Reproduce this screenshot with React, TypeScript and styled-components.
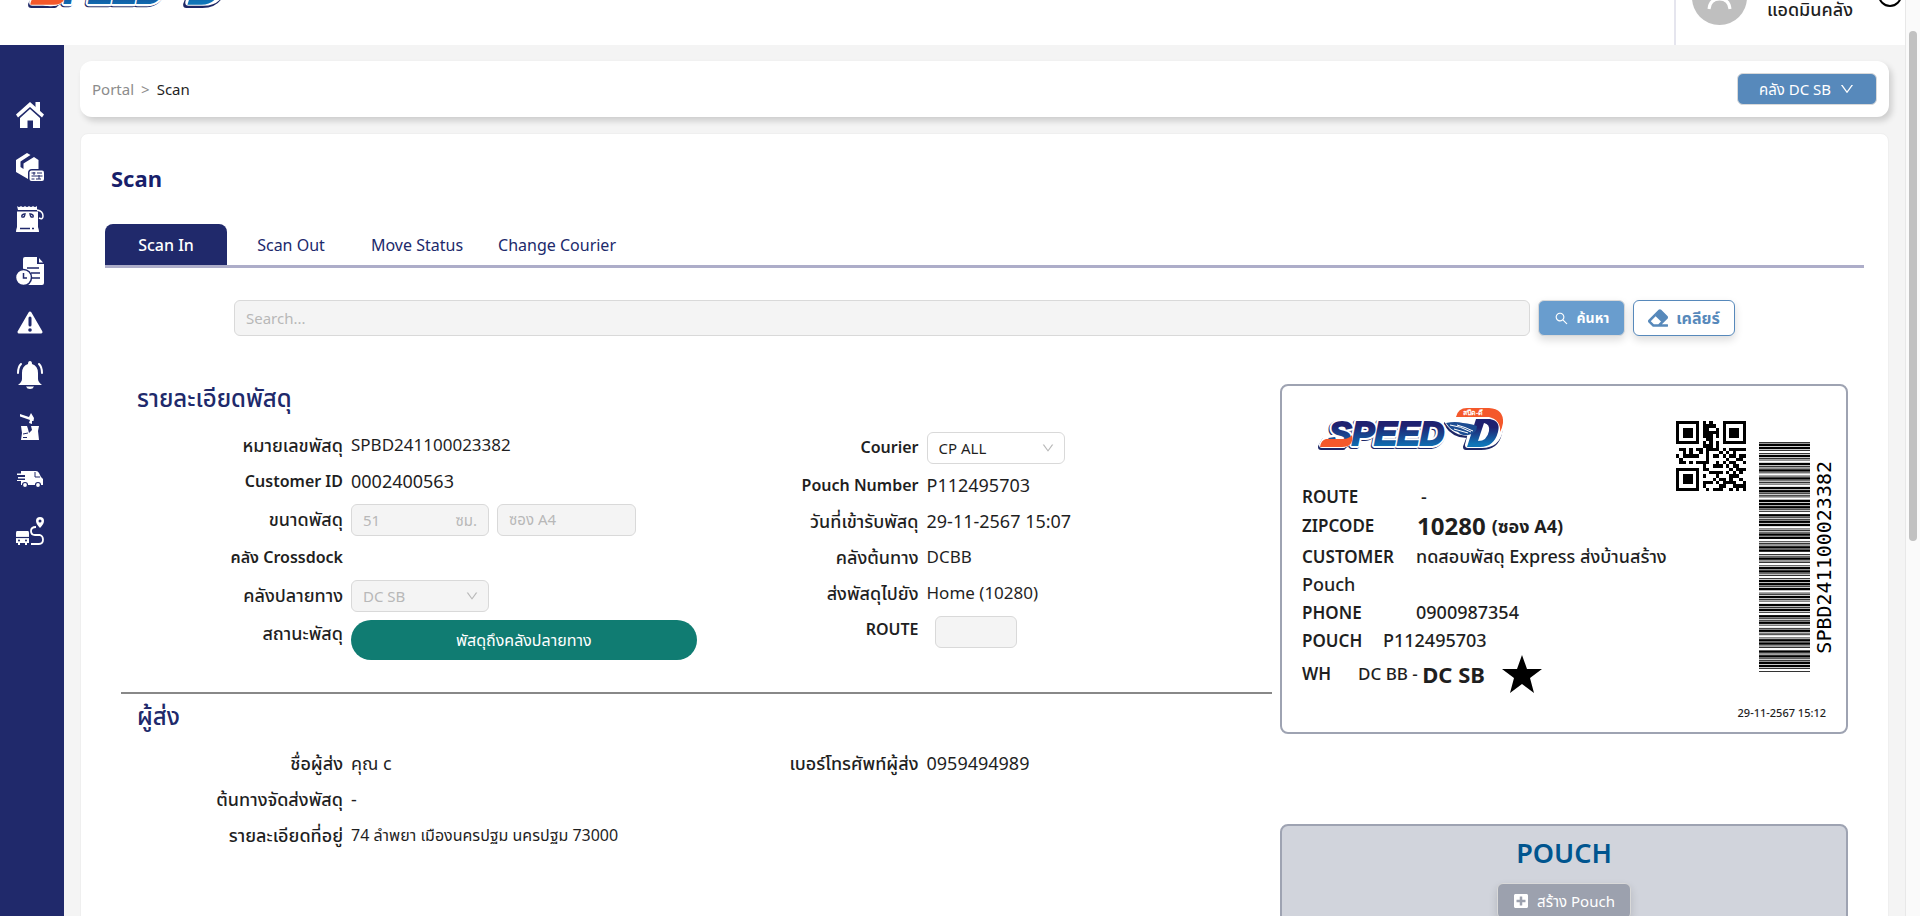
import React, { useId } from 'react';
import styled, { createGlobalStyle } from 'styled-components';
import { AiOutlineDown, AiOutlineSearch } from 'react-icons/ai';
import { FaEraser, FaPlusSquare } from 'react-icons/fa';

const GlobalStyle = createGlobalStyle`
  *, *::before, *::after { box-sizing: border-box; }
  body {
    margin: 0;
    background: #f4f4f4;
    color: #1f1f1f;
    font-family: "Noto Sans", "Noto Sans Thai", "Prompt", sans-serif;
    font-size: 17px;
    line-height: 24px;
  }
  button, input, select { font: inherit; }
`;

/* ---------- code generators ---------- */

const ALNUM = '0123456789ABCDEFGHIJKLMNOPQRSTUVWXYZ $%*+-./:';

function gfMul(a: number, b: number) {
  let r = 0;
  for (let i = 7; i >= 0; i--) {
    r = (r << 1) ^ ((r >> 7) * 0x11d);
    r ^= ((b >> i) & 1) * a;
  }
  return r;
}

function reedSolomon(data: number[], degree: number) {
  const gen: number[] = new Array(degree).fill(0);
  gen[degree - 1] = 1;
  let root = 1;
  for (let i = 0; i < degree; i++) {
    for (let j = 0; j < degree; j++) {
      gen[j] = gfMul(gen[j], root);
      if (j + 1 < degree) gen[j] ^= gen[j + 1];
    }
    root = gfMul(root, 2);
  }
  const rem: number[] = new Array(degree).fill(0);
  for (const b of data) {
    const f = b ^ (rem.shift() as number);
    rem.push(0);
    gen.forEach((g, i) => { rem[i] ^= gfMul(g, f); });
  }
  return rem;
}

/* Version 1 symbol, error correction level Q, alphanumeric mode, mask 0. */
function encodeQr(text: string): boolean[][] {
  let bits = '0010' + text.length.toString(2).padStart(9, '0');
  for (let i = 0; i < text.length; i += 2) {
    if (i + 1 < text.length) {
      bits += (ALNUM.indexOf(text[i]) * 45 + ALNUM.indexOf(text[i + 1])).toString(2).padStart(11, '0');
    } else {
      bits += ALNUM.indexOf(text[i]).toString(2).padStart(6, '0');
    }
  }
  bits = bits.padEnd(104, '0').slice(0, 104);
  const data = (bits.match(/.{8}/g) as string[]).map((b) => parseInt(b, 2));
  const stream = [...data, ...reedSolomon(data, 13)];

  const m: boolean[][] = Array.from({ length: 21 }, () => new Array(21).fill(false));
  const used: boolean[][] = Array.from({ length: 21 }, () => new Array(21).fill(false));
  const set = (x: number, y: number, v: boolean) => {
    if (x < 0 || y < 0 || x > 20 || y > 20) return;
    m[y][x] = v;
    used[y][x] = true;
  };
  for (let i = 0; i < 21; i++) {
    set(6, i, i % 2 === 0);
    set(i, 6, i % 2 === 0);
  }
  [[3, 3], [17, 3], [3, 17]].forEach(([cx, cy]) => {
    for (let dy = -4; dy <= 4; dy++) {
      for (let dx = -4; dx <= 4; dx++) {
        const d = Math.max(Math.abs(dx), Math.abs(dy));
        set(cx + dx, cy + dy, d !== 2 && d !== 4);
      }
    }
  });
  const head = 3 << 3;
  let rem = head;
  for (let i = 0; i < 10; i++) rem = (rem << 1) ^ ((rem >> 9) * 0x537);
  const format = ((head << 10) | rem) ^ 0x5412;
  const bit = (i: number) => ((format >> i) & 1) === 1;
  for (let i = 0; i <= 5; i++) set(8, i, bit(i));
  set(8, 7, bit(6));
  set(8, 8, bit(7));
  set(7, 8, bit(8));
  for (let i = 9; i < 15; i++) set(14 - i, 8, bit(i));
  for (let i = 0; i < 8; i++) set(20 - i, 8, bit(i));
  for (let i = 8; i < 15; i++) set(8, 6 + i, bit(i));
  set(8, 13, true);

  let n = 0;
  for (let right = 20; right >= 1; right -= 2) {
    if (right === 6) right = 5;
    for (let v = 0; v < 21; v++) {
      for (let j = 0; j < 2; j++) {
        const x = right - j;
        const up = ((right + 1) & 2) === 0;
        const y = up ? 20 - v : v;
        if (!used[y][x] && n < 208) {
          const on = ((stream[n >> 3] >> (7 - (n & 7))) & 1) === 1;
          m[y][x] = on !== ((x + y) % 2 === 0);
          n++;
        }
      }
    }
  }
  return m;
}

const CODE39: Record<string, string> = {
  '0': 'nnnwwnwnn', '1': 'wnnwnnnnw', '2': 'nnwwnnnnw', '3': 'wnwwnnnnn', '4': 'nnnwwnnnw',
  '5': 'wnnwwnnnn', '6': 'nnwwwnnnn', '7': 'nnnwnnwnw', '8': 'wnnwnnwnn', '9': 'nnwwnnwnn',
  B: 'nnwnnwnnw', D: 'nnnnwwnnw', P: 'nnwnwnnwn', S: 'nnwnnnwwn', '*': 'nwnnwnwnn',
};

function code39Bars(text: string) {
  const bars: Array<{ at: number; size: number }> = [];
  let at = 0;
  for (const ch of `*${text}*`) {
    [...CODE39[ch]].forEach((el, i) => {
      const size = el === 'w' ? 3 : 1;
      if (i % 2 === 0) bars.push({ at, size });
      at += size;
    });
    at += 1;
  }
  return { bars, total: at - 1 };
}

const QrCode = ({ value }: { value: string }) => (
  <svg width="70" height="70" viewBox="0 0 21 21" role="img" aria-label={value} shapeRendering="crispEdges">
    {encodeQr(value).map((row, y) =>
      row.map((on, x) => (on ? <rect key={`${x}-${y}`} x={x} y={y} width="1" height="1" fill="#000" /> : null)),
    )}
  </svg>
);

const Barcode = ({ value }: { value: string }) => {
  const { bars, total } = code39Bars(value);
  return (
    <svg width="51" height="230" viewBox={`0 0 51 ${total}`} preserveAspectRatio="none" role="img" aria-label={value}>
      {bars.map((b) => (
        <rect key={b.at} x="0" y={total - b.at - b.size} width="51" height={b.size} fill="#000" />
      ))}
    </svg>
  );
};

/* ---------- drawings ---------- */

const Logo = ({ width }: { width: number }) => {
  const id = useId();
  const blue = `url(#${id}b)`;
  const word = { fontFamily: '"Liberation Sans", sans-serif', fontWeight: 700, fontStyle: 'italic' } as const;
  return (
    <svg width={width} viewBox="0 0 187 43" role="img" aria-label="SPEED-D">
      <defs>
        <linearGradient id={`${id}b`} x1="0" y1="0" x2="0" y2="1">
          <stop offset="0.3" stopColor="#1f2170" />
          <stop offset="0.9" stopColor="#0f75b8" />
        </linearGradient>
      </defs>
      <g fill="#1d2766" stroke="#1d2766" strokeWidth="6" strokeLinejoin="round">
        <text x="11" y="38" fontSize="34" {...word}>SPEED</text>
        <path d="M4 39 L8 32 H30 L26 39Z" />
        <path d="M149 39 L158 15 H176 Q185 15 182 25 Q179 39 164 39Z" />
        <path d="M130 16 Q144 14 156 18 L152 27 Q138 28 130 16Z" />
      </g>
      <g fill="#fff" stroke="#fff" strokeWidth="6" strokeLinejoin="round">
        <text x="12" y="37" fontSize="34" {...word}>SPEED</text>
        <path d="M5 37 L9 30 H30 L26 37Z" />
        <path d="M151 37 L159 5 H176 Q185 12 183 22 Q180 37 165 37Z" />
        <path d="M131 14 Q144 10 158 16 L152 25 Q138 25 131 14Z" />
      </g>
      <text x="12" y="37" fontSize="34" fill={blue} stroke={blue} strokeWidth="2" {...word}>SPEED</text>
      <path d="M3 39 Q4 32 9 31 H27 Q33 30 35 27 Q37 39 25 39Z" fill="#f4582b" />
      <path d="M139 9 Q141 0 150 0 H172 Q187 1 186 15 Q185 21 183 24 Q184 12 172 9Z" fill="#f4582b" />
      <path
        fillRule="evenodd"
        d="M150 39 L159 11 H173 Q184 13 181 24 Q177 39 163 39Z M161 33 Q170 33 172 23 Q173 16 167 15Z"
        fill={blue}
      />
      <path d="M129 15 Q138 13 146 15 Q155 16 160 18 Q160 26 151 27 Q145 28 141 24 Q134 23 129 15Z" fill="#1c4c92" />
      <path d="M133 17 Q143 18 154 24 M140 17 Q148 19 156 23 M137 21 Q144 23 151 25" fill="none" stroke="#fff" strokeWidth="1" />
      <text x="146" y="7" fontSize="7" fontWeight="600" fill="#fff" fontFamily='"Noto Sans", sans-serif'>สปีด-ดี</text>
    </svg>
  );
};

const icons: Array<{ name: string; art: React.ReactNode }> = [
  {
    name: 'หน้าหลัก',
    art: (
      <g fill="#fff">
        <path d="M14 1 L28 13.500 L26 16.500 L14 6 L2 16.500 L0 13.500Z" />
        <path d="M19.500 1 h4.500 v10 l-4.500 -4Z" />
        <path d="M14 8 L24 17 V27 H17 V19.500 H11.500 V27 H4 V17Z" />
      </g>
    ),
  },
  {
    name: 'พัสดุ',
    art: (
      <g fill="#fff">
        <path d="M0 7 L11 0 L14.500 2 L4.500 8.500 V14 L7.500 16 V10.500 L18 4 L22.500 7 V16 H16 Q12 16 12 20 V26 L0 19Z" />
        <rect x="13.500" y="17.500" width="14.500" height="10.500" rx="2" />
        <path d="M15.500 20h4M21 20h5M15.500 23h11M15.500 26h3M20 26h5M18 19v3M23 22v4" stroke="#20296b" strokeWidth="1" fill="none" />
      </g>
    ),
  },
  {
    name: 'ถุงพัสดุ',
    art: (
      <g>
        <path d="M1 1 Q3 3 5 1 Q7 3 9 1 Q11 3 13 1 Q15 3 17 1 Q19 3 21 1 V5 H2Z" fill="#fff" />
        <path d="M1 6.500 H22 V22 Q23 25 23 27 H0 Q0 25 1 22Z" fill="#fff" />
        <path d="M21 5 Q27 6 27 11 Q27 15 23 13" fill="none" stroke="#fff" strokeWidth="1.500" />
        <path d="M9 8 Q9 13 6 12 Q5 10 8 9M14 8 Q14 13 17 12 Q18 10 15 9M4 23.500h10M16 23.500h2" fill="none" stroke="#20296b" strokeWidth="1.400" />
      </g>
    ),
  },
  {
    name: 'ประวัติ',
    art: (
      <g>
        <path d="M9 0 H21 V7 H28 V26 Q28 28 26 28 H7 V2 Q7 0 9 0Z" fill="#fff" />
        <path d="M23 1 L27 5.500 H23Z" fill="#fff" />
        <path d="M11 11h12M15 16h9M15 21h9" stroke="#20296b" strokeWidth="1.500" />
        <circle cx="7.500" cy="20.500" r="8" fill="#fff" stroke="#20296b" strokeWidth="1.500" />
        <path d="M7.500 16 V21 H11" fill="none" stroke="#20296b" strokeWidth="1.500" />
      </g>
    ),
  },
  {
    name: 'แจ้งปัญหา',
    art: (
      <g>
        <path d="M14 4 L25 23 H3Z" fill="#fff" stroke="#fff" strokeWidth="3" strokeLinejoin="round" />
        <path d="M14 9 V16" stroke="#20296b" strokeWidth="3" strokeLinecap="round" />
        <circle cx="14" cy="21" r="1.800" fill="#20296b" />
      </g>
    ),
  },
  {
    name: 'แจ้งเตือน',
    art: (
      <g>
        <path d="M14 0 Q16 0 16 3 Q22 5 22 12 V18 Q22 21 26 24 H2 Q6 21 6 18 V12 Q6 5 12 3 Q12 0 14 0Z" fill="#fff" />
        <path d="M10 25.500 H18 Q17 28 14 28 Q11 28 10 25.500Z" fill="#fff" />
        <path d="M5 3 Q2 6 2 12M23 3 Q26 6 26 12" fill="none" stroke="#fff" strokeWidth="2" strokeLinecap="round" />
      </g>
    ),
  },
  {
    name: 'พัสดุเสียหาย',
    art: (
      <g fill="#fff">
        <path d="M4 1 L13 4 L15 0 L18 5 L17.500 8 L16 8 V11 L13 10 L14 7 L4 3.500Z" />
        <path d="M5 13 H11 L12 16 L13 20 L16 17 L15 13 H23 L22 18 L23 27 H5 L6 20Z" />
        <path d="M7 21 L12 20M7 24.500h4" stroke="#20296b" strokeWidth="1" />
      </g>
    ),
  },
  {
    name: 'ขนส่ง',
    art: (
      <g>
        <path d="M5 6 H20 Q22 6 23 8 L25 12 L27 14 V20 H5 V16 H1 V15 H9 V13.500 H2 V12 H9 V10 H1 V8.500 H5Z" fill="#fff" />
        <path d="M19 7 V12 H24" fill="none" stroke="#20296b" strokeWidth="1" />
        <circle cx="9" cy="20" r="2.500" fill="#fff" stroke="#20296b" strokeWidth="1.200" />
        <circle cx="22" cy="20" r="2.500" fill="#fff" stroke="#20296b" strokeWidth="1.200" />
      </g>
    ),
  },
  {
    name: 'เส้นทาง',
    art: (
      <g>
        <path d="M1 14 H12 Q13 14 13 16 V26 H11 V28 H9 V26 H4 V28 H2 V26 H0 V16 Q0 14 1 14Z" fill="#fff" />
        <path d="M0 20.500h13" stroke="#20296b" strokeWidth="1.200" />
        <circle cx="3" cy="23.500" r="1" fill="#20296b" />
        <circle cx="10" cy="23.500" r="1" fill="#20296b" />
        <path d="M24 0 Q28 0 28 4 Q28 7 24 11 Q20 7 20 4 Q20 0 24 0Z" fill="#fff" />
        <circle cx="24" cy="4" r="1.500" fill="#20296b" />
        <path d="M20 10 Q15 10 15 14 Q15 18 19 18 H24 Q27 19 27 22.500 Q27 27 23 27 H15" fill="none" stroke="#fff" strokeWidth="1.800" />
      </g>
    ),
  },
];

/* ---------- page frame ---------- */

const Page = styled.div`
  display: flex;
  height: 100vh;
  overflow: hidden;
`;

const Viewport = styled.div`
  flex: 1;
  min-width: 0;
  display: flex;
  flex-direction: column;
`;

const ScrollTrack = styled.div`
  flex: 0 0 15px;
  display: flex;
  justify-content: center;
  padding-top: 31px;
  background: #fafafa;
  border-left: 1px solid #e8e8e8;
`;

const ScrollThumb = styled.div`
  width: 8px;
  height: 510px;
  border-radius: 4px;
  background: #c1c1c1;
`;

const Header = styled.header`
  flex: 0 0 45px;
  display: flex;
  justify-content: space-between;
  align-items: flex-end;
  overflow: hidden;
  background: #fff;
`;

const Brand = styled.a`
  display: flex;
  padding: 0 0 36px 27px;
`;

const Account = styled.div`
  display: flex;
  align-items: flex-end;
  height: 80px;
  padding: 0 3px 20px 16px;
  border-left: 2px solid #e5e5ee;
`;

const AccountName = styled.span`
  padding: 0 25px 4px 20px;
  font-size: 18px;
  font-weight: 500;
`;

const SignOut = styled.button`
  width: 24px;
  height: 24px;
  margin-bottom: 18px;
  border: 2px solid #000;
  border-radius: 50%;
  background: none;
`;

const Body = styled.div`
  flex: 1;
  min-height: 0;
  display: flex;
`;

const Sidebar = styled.nav`
  flex: 0 0 64px;
  display: flex;
  flex-direction: column;
  padding: 44px 4px 0 0;
  background: #20296b;
`;

const SideLink = styled.a`
  display: flex;
  justify-content: center;
  align-items: center;
  height: 52px;
`;

const Main = styled.main`
  flex: 1;
  min-width: 0;
  display: flex;
  flex-direction: column;
  gap: 16px;
  padding: 16px 16px 0;
`;

const TopBar = styled.div`
  flex: none;
  display: flex;
  justify-content: space-between;
  align-items: center;
  height: 56px;
  padding: 0 12px;
  border-radius: 12px;
  background: #fff;
  box-shadow: 3px 4px 6px rgba(0, 0, 0, 0.16);
`;

const Crumbs = styled.nav`
  display: flex;
  gap: 7px;
  font-size: 15px;
  color: #8c8c8c;
  a { color: inherit; text-decoration: none; }
  strong { color: #1f1f1f; font-weight: 400; }
`;

const WarehouseButton = styled.button`
  display: flex;
  align-items: center;
  justify-content: center;
  gap: 8px;
  width: 140px;
  height: 32px;
  border: 1px solid #d9d9d9;
  border-radius: 6px;
  background: #5789bb;
  color: #fff;
  font-size: 15px;
`;

const Card = styled.section`
  flex: 1 0 auto;
  padding: 24px;
  border: 1px solid #efefef;
  border-radius: 8px;
  background: #fff;
`;

const Title = styled.h1`
  margin: 4px 0 30px 6px;
  font-size: 22px;
  line-height: 32px;
  font-weight: 700;
  color: #181f6b;
`;

const Tabs = styled.div`
  display: flex;
  gap: 3px;
  border-bottom: 3px solid #adadc9;
`;

const Tab = styled.button<{ $active?: boolean }>`
  min-width: 122px;
  height: 41px;
  padding: 0 16px;
  border: 0;
  border-radius: 8px 8px 0 0;
  background: ${(p) => (p.$active ? '#20296b' : 'transparent')};
  color: ${(p) => (p.$active ? '#fff' : '#20296b')};
  font-size: 16px;
  font-weight: ${(p) => (p.$active ? 500 : 400)};
`;

const SearchRow = styled.form`
  display: flex;
  align-items: center;
  gap: 8px;
  margin: 32px 129px 0;
`;

const Field = styled.input`
  min-width: 0;
  height: 32px;
  padding: 0 11px;
  border: 1px solid #d9d9d9;
  border-radius: 6px;
  background: #f4f4f4;
  color: #b8b8b8;
  font-size: 15px;
  &::placeholder { color: #b8b8b8; opacity: 1; }
`;

const SearchField = styled(Field)`
  flex: 1;
  height: 36px;
`;

const ActionButton = styled.button<{ $outline?: boolean }>`
  display: flex;
  align-items: center;
  justify-content: center;
  gap: 8px;
  width: ${(p) => (p.$outline ? 102 : 87)}px;
  height: 36px;
  border: 1px solid ${(p) => (p.$outline ? '#5789bb' : '#d9d9d9')};
  border-radius: 6px;
  background: ${(p) => (p.$outline ? '#fff' : '#699dce')};
  color: ${(p) => (p.$outline ? '#5789bb' : '#fff')};
  font-size: ${(p) => (p.$outline ? 16 : 14)}px;
  font-weight: 700;
  box-shadow: 0 4px 8px rgba(0, 0, 0, 0.14);
`;

const Columns = styled.div`
  display: grid;
  grid-template-columns: minmax(0, 1151fr) minmax(0, 568fr);
  gap: 8px;
  margin: 44px 16px 0;
`;

const Group = styled.section`
  padding-bottom: 28px;
  & + & {
    padding-top: 4px;
    border-top: 2px solid #888;
  }
`;

const GroupTitle = styled.h2`
  margin: 0 0 12px;
  padding: 0 16px;
  font-size: 24px;
  line-height: 36px;
  font-weight: 500;
  color: #20296b;
`;

const Pair = styled.div`
  display: grid;
  grid-template-columns: 1fr 1fr;
  align-items: start;
`;

const Row = styled.div<{ $middle?: boolean }>`
  display: flex;
  gap: 8px;
  align-items: ${(p) => (p.$middle ? 'center' : 'flex-start')};
`;

const Name = styled.label<{ $latin?: boolean }>`
  flex: 0 0 222px;
  padding: 5px 0 7px;
  text-align: right;
  font-size: ${(p) => (p.$latin ? 16 : 18)}px;
  font-weight: ${(p) => (p.$latin ? 600 : 500)};
`;

const Value = styled.output<{ $size?: number }>`
  padding: 5px 0 7px;
  font-size: ${(p) => p.$size ?? 18}px;
`;

const Controls = styled.div`
  flex: 1;
  display: flex;
  gap: 8px;
  padding: 4px 0;
`;

const Suffixed = styled.span`
  display: flex;
  align-items: center;
  width: 138px;
  height: 32px;
  padding-right: 11px;
  border: 1px solid #d9d9d9;
  border-radius: 6px;
  background: #f4f4f4;
  color: #b8b8b8;
  font-size: 15px;
`;

const BareInput = styled.input`
  flex: 1;
  min-width: 0;
  padding: 0 11px;
  border: 0;
  background: none;
  color: inherit;
`;

const SizeField = styled(Field)`
  width: 139px;
`;

const RouteField = styled(Field)`
  width: 82px;
  margin-left: 8px;
`;

const SelectBox = styled.span`
  position: relative;
  display: flex;
  width: 138px;
  svg {
    position: absolute;
    right: 10px;
    top: 9px;
    pointer-events: none;
    color: #b8b8b8;
  }
`;

const Select = styled.select`
  appearance: none;
  width: 100%;
  height: 32px;
  padding: 0 11px;
  border: 1px solid #d9d9d9;
  border-radius: 6px;
  background: #fff;
  color: #1f1f1f;
  font-size: 15px;
  opacity: 1;
  &:disabled { background: #f4f4f4; color: #b8b8b8; }
`;

const StatusButton = styled.button`
  flex: 1;
  height: 40px;
  border: 0;
  border-radius: 20px;
  background: #107c72;
  color: #fff;
  font-size: 16px;
`;

/* ---------- right column ---------- */

const Side = styled.div`
  display: flex;
  flex-direction: column;
  gap: 90px;
  padding-top: 4px;
`;

const Sticker = styled.article`
  display: flex;
  justify-content: space-between;
  height: 350px;
  padding: 22px 10px 0 20px;
  border: 2px solid #9ea3b2;
  border-radius: 8px;
`;

const StickerText = styled.div`
  flex: 1;
  min-width: 0;
  font-size: 18px;
  font-weight: 500;
`;

const StickerLogo = styled.div`
  display: flex;
  padding: 0 0 31px 15px;
`;

const Line = styled.div`
  line-height: 28px;
`;

const ZipLine = styled.div`
  display: flex;
  align-items: center;
  height: 32px;
`;

const Big = styled.b<{ $size: number }>`
  margin-right: 6px;
  font-size: ${(p) => p.$size}px;
  font-weight: 700;
`;

const Key = styled.span<{ $w: number }>`
  display: inline-block;
  min-width: ${(p) => p.$w}px;
  font-size: 17px;
  line-height: 20px;
  font-weight: 600;
`;

const WarehouseLine = styled.div`
  display: flex;
  align-items: center;
  height: 40px;
  font-size: 17px;
  svg { margin-left: 11px; }
`;

const Codes = styled.div`
  display: flex;
  flex-direction: column;
  justify-content: space-between;
  align-items: flex-end;
  padding-bottom: 7px;
`;

const CodeRow = styled.div`
  display: flex;
  align-items: flex-start;
  padding-top: 13px;
`;

const BarcodeWrap = styled.div`
  display: flex;
  align-items: center;
  gap: 2px;
  padding: 21px 0 0 13px;
`;

const CodeText = styled.span`
  writing-mode: vertical-rl;
  transform: rotate(180deg);
  font-family: "DejaVu Sans Mono", monospace;
  font-size: 20px;
  line-height: 24px;
  color: #000;
`;

const Stamp = styled.time`
  padding-right: 10px;
  font-size: 11px;
  font-weight: 500;
`;

const PouchPanel = styled.section`
  display: flex;
  flex-direction: column;
  align-items: center;
  gap: 12px;
  height: 240px;
  padding-top: 9px;
  border: 2px solid #9ea3b2;
  border-radius: 8px;
  background: #d1d4dc;
`;

const PouchTitle = styled.h2`
  margin: 0;
  font-size: 27px;
  line-height: 36px;
  font-weight: 600;
  color: #00558f;
`;

const PouchButton = styled.button`
  display: flex;
  align-items: center;
  gap: 8px;
  height: 36px;
  padding: 0 15px;
  border: 1px solid #d9d9d9;
  border-radius: 6px;
  background: #9ca1ae;
  color: #fff;
  font-size: 15px;
  box-shadow: 0 4px 8px rgba(0, 0, 0, 0.14);
`;

const PARCEL = 'SPBD241100023382';

export default function App() {
  return (
    <>
      <GlobalStyle />
      <Page>
        <Viewport>
          <Header>
            <Brand href="#home"><Logo width={200} /></Brand>
            <Account>
              <svg width="55" height="55" viewBox="0 0 55 55" aria-hidden="true">
                <circle cx="27.500" cy="27.500" r="27.500" fill="#bfbfbf" />
                <circle cx="27.500" cy="20" r="8" fill="none" stroke="#fff" strokeWidth="3" />
                <path d="M17 39 Q18 29 27.500 29 Q37 29 38 39" fill="none" stroke="#fff" strokeWidth="3" />
              </svg>
              <AccountName>แอดมินคลัง</AccountName>
              <SignOut aria-label="Sign out" />
            </Account>
          </Header>
          <Body>
            <Sidebar>
              {icons.map((i) => (
                <SideLink key={i.name} href="#menu" aria-label={i.name}>
                  <svg width="28" height="28" viewBox="0 0 28 28">{i.art}</svg>
                </SideLink>
              ))}
            </Sidebar>
            <Main>
              <TopBar>
                <Crumbs><a href="#portal">Portal</a><span>&gt;</span><strong>Scan</strong></Crumbs>
                <WarehouseButton type="button">คลัง DC SB <AiOutlineDown size={16} /></WarehouseButton>
              </TopBar>
              <Card>
                <Title>Scan</Title>
                <Tabs role="tablist">
                  <Tab role="tab" aria-selected="true" $active>Scan In</Tab>
                  <Tab role="tab">Scan Out</Tab>
                  <Tab role="tab">Move Status</Tab>
                  <Tab role="tab">Change Courier</Tab>
                </Tabs>
                <SearchRow>
                  <SearchField aria-label="Search" placeholder="Search..." disabled />
                  <ActionButton type="button"><AiOutlineSearch size={15} />ค้นหา</ActionButton>
                  <ActionButton type="button" $outline><FaEraser size={20} />เคลียร์</ActionButton>
                </SearchRow>
                <Columns>
                  <div>
                    <Group>
                      <GroupTitle>รายละเอียดพัสดุ</GroupTitle>
                      <Pair>
                        <div>
                          <Row><Name htmlFor="no">หมายเลขพัสดุ</Name><Value id="no" $size={17}>{PARCEL}</Value></Row>
                          <Row><Name htmlFor="cid" $latin>Customer ID</Name><Value id="cid">0002400563</Value></Row>
                          <Row $middle>
                            <Name htmlFor="size">ขนาดพัสดุ</Name>
                            <Controls>
                              <Suffixed><BareInput id="size" defaultValue="51" disabled />ซม.</Suffixed>
                              <SizeField aria-label="ประเภทซอง" defaultValue="ซอง A4" disabled />
                            </Controls>
                          </Row>
                          <Row><Name htmlFor="cd" $latin>คลัง Crossdock</Name><Value id="cd" /></Row>
                          <Row $middle>
                            <Name htmlFor="dest">คลังปลายทาง</Name>
                            <Controls>
                              <SelectBox>
                                <Select id="dest" disabled><option>DC SB</option></Select>
                                <AiOutlineDown size={14} />
                              </SelectBox>
                            </Controls>
                          </Row>
                          <Row>
                            <Name htmlFor="status">สถานะพัสดุ</Name>
                            <Controls><StatusButton id="status" type="button">พัสดุถึงคลังปลายทาง</StatusButton></Controls>
                          </Row>
                        </div>
                        <div>
                          <Row $middle>
                            <Name htmlFor="courier" $latin>Courier</Name>
                            <Controls>
                              <SelectBox>
                                <Select id="courier"><option>CP ALL</option></Select>
                                <AiOutlineDown size={14} />
                              </SelectBox>
                            </Controls>
                          </Row>
                          <Row><Name htmlFor="pn" $latin>Pouch Number</Name><Value id="pn">P112495703</Value></Row>
                          <Row><Name htmlFor="dt">วันที่เข้ารับพัสดุ</Name><Value id="dt">29-11-2567 15:07</Value></Row>
                          <Row><Name htmlFor="src">คลังต้นทาง</Name><Value id="src" $size={17}>DCBB</Value></Row>
                          <Row><Name htmlFor="to">ส่งพัสดุไปยัง</Name><Value id="to" $size={17}>Home (10280)</Value></Row>
                          <Row>
                            <Name htmlFor="route" $latin>ROUTE</Name>
                            <Controls><RouteField id="route" disabled /></Controls>
                          </Row>
                        </div>
                      </Pair>
                    </Group>
                    <Group>
                      <GroupTitle>ผู้ส่ง</GroupTitle>
                      <Pair>
                        <div>
                          <Row><Name htmlFor="sn">ชื่อผู้ส่ง</Name><Value id="sn">คุณ c</Value></Row>
                          <Row><Name htmlFor="so">ต้นทางจัดส่งพัสดุ</Name><Value id="so">-</Value></Row>
                          <Row><Name htmlFor="sa">รายละเอียดที่อยู่</Name><Value id="sa" $size={16}>74 ลำพยา เมืองนครปฐม นครปฐม 73000</Value></Row>
                        </div>
                        <div>
                          <Row><Name htmlFor="sp">เบอร์โทรศัพท์ผู้ส่ง</Name><Value id="sp">0959494989</Value></Row>
                        </div>
                      </Pair>
                    </Group>
                  </div>
                  <Side>
                    <Sticker>
                      <StickerText>
                        <StickerLogo><Logo width={187} /></StickerLogo>
                        <Line><Key $w={119}>ROUTE</Key>-</Line>
                        <ZipLine><Key $w={115}>ZIPCODE</Key><Big $size={24}>10280</Big><Big $size={18}>(ซอง A4)</Big></ZipLine>
                        <Line><Key $w={114}>CUSTOMER</Key>ทดสอบพัสดุ Express ส่งบ้านสร้าง Pouch</Line>
                        <Line><Key $w={114}>PHONE</Key>0900987354</Line>
                        <Line><Key $w={81}>POUCH</Key>P112495703</Line>
                        <WarehouseLine>
                          <Key $w={56}>WH</Key>DC BB -&nbsp;<Big $size={22}>DC SB</Big>
                          <svg width="40" height="38" viewBox="0 0 40 38" aria-hidden="true">
                            <path d="M20 0 L25 14 H40 L28 23 L32 38 L20 29 L8 38 L12 23 L0 14 H15Z" fill="#000" />
                          </svg>
                        </WarehouseLine>
                      </StickerText>
                      <Codes>
                        <CodeRow>
                          <QrCode value={PARCEL} />
                          <BarcodeWrap>
                            <Barcode value={PARCEL} />
                            <CodeText>{PARCEL}</CodeText>
                          </BarcodeWrap>
                        </CodeRow>
                        <Stamp>29-11-2567 15:12</Stamp>
                      </Codes>
                    </Sticker>
                    <PouchPanel>
                      <PouchTitle>POUCH</PouchTitle>
                      <PouchButton type="button"><FaPlusSquare size={16} />สร้าง Pouch</PouchButton>
                    </PouchPanel>
                  </Side>
                </Columns>
              </Card>
            </Main>
          </Body>
        </Viewport>
        <ScrollTrack><ScrollThumb /></ScrollTrack>
      </Page>
    </>
  );
}
